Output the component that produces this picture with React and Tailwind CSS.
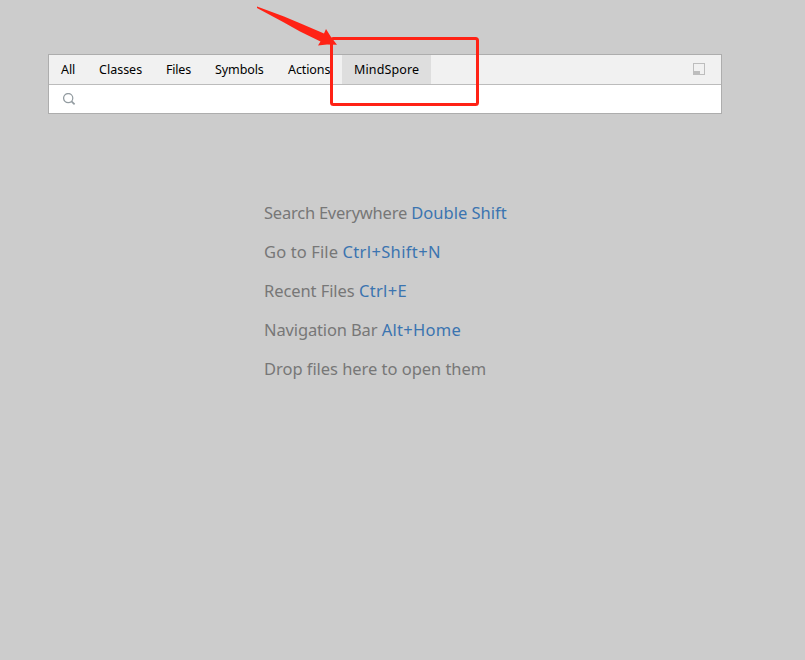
import React from "react";

const tabs = [
  { label: "All", style: "w-[38px] tracking-[-0.1px]" },
  { label: "Classes", style: "w-[67px]" },
  { label: "Files", style: "w-[49px] tracking-[-0.2px]" },
  { label: "Symbols", style: "w-[73px] tracking-[-0.1px]" },
  { label: "Actions", style: "w-[66px] tracking-[-0.1px]" },
  { label: "MindSpore", style: "w-[89px] bg-[#dedede] tracking-[0.12px]" },
];

const hints = [
  { text: "Search Everywhere", keys: "Double Shift", textStyle: "tracking-[-0.23px]", keyStyle: "tracking-[0px]" },
  { text: "Go to File", keys: "Ctrl+Shift+N", textStyle: "tracking-[0.13px]", keyStyle: "tracking-[0.36px]" },
  { text: "Recent Files", keys: "Ctrl+E", textStyle: "tracking-[-0.08px]", keyStyle: "tracking-[0.33px]" },
  { text: "Navigation Bar", keys: "Alt+Home", textStyle: "tracking-[-0.14px]", keyStyle: "tracking-[0.27px]" },
  { text: "Drop files here to open them", keys: "", textStyle: "tracking-[-0.04px]", keyStyle: "" },
];

function SearchPopup() {
  return (
    <section className="ml-12 h-[60px] w-[674px] border border-[#adadad] bg-white">
      <div className="flex h-[30px] items-stretch border-b border-[#bcbcbc] bg-[#f1f1f1]">
        <div className="flex">
          {tabs.map((tab) => (
            <button
              key={tab.label}
              className={`flex items-center whitespace-nowrap pl-3 pt-[2px] text-[12.5px] leading-none text-black ${tab.style}`}
            >
              {tab.label}
            </button>
          ))}
        </div>
        <div className="ml-auto flex items-center pr-4">
          <svg width="12" height="12" viewBox="0 0 12 12" className="-mt-px" shapeRendering="crispEdges">
            <path d="M0.5 0.5H11.5V11.5H0.5Z" fill="none" stroke="#bdbdbd" />
            <path d="M0 8H7V12H0Z" fill="#bdbdbd" />
          </svg>
        </div>
      </div>
      <div className="flex h-7 items-center pl-[14px]">
        <svg width="13" height="13" viewBox="0 0 13 13" fill="none" stroke="#939ca1">
          <circle cx="5.2" cy="5.1" r="4.6" strokeWidth="1.25" />
          <path d="M8.5 8.4L11.6 11.4" strokeWidth="1.7" />
        </svg>
      </div>
    </section>
  );
}

export default function App() {
  return (
    <main className="relative h-[660px] w-[805px] overflow-hidden bg-[#cccccc] pt-[54px] font-['Noto_Sans',sans-serif]">
      <SearchPopup />
      <div className="ml-[264px] mt-[79px] flex flex-col text-[16.5px] leading-[39px] text-[#777777]">
        {hints.map((hint) => (
          <p key={hint.text} className="whitespace-nowrap">
            <span className={hint.textStyle}>{hint.text}</span>{" "}
            <span className={`text-[#3b74b0] ${hint.keyStyle}`}>{hint.keys}</span>
          </p>
        ))}
      </div>
      <svg className="absolute left-0 top-0" width="805" height="120" viewBox="0 0 805 120">
        <rect x="331.5" y="38.5" width="146" height="66" rx="2" fill="none" stroke="#ff2215" strokeWidth="3" />
        <path d="M257 6.5L284 16.5L303 24.5L324 33.5L326 29L331 37L337 44.7L327 44.5L318 45.5L320.5 41.5L300 31.5L284 22.5L257 8Z" fill="#ff2215" />
      </svg>
    </main>
  );
}
